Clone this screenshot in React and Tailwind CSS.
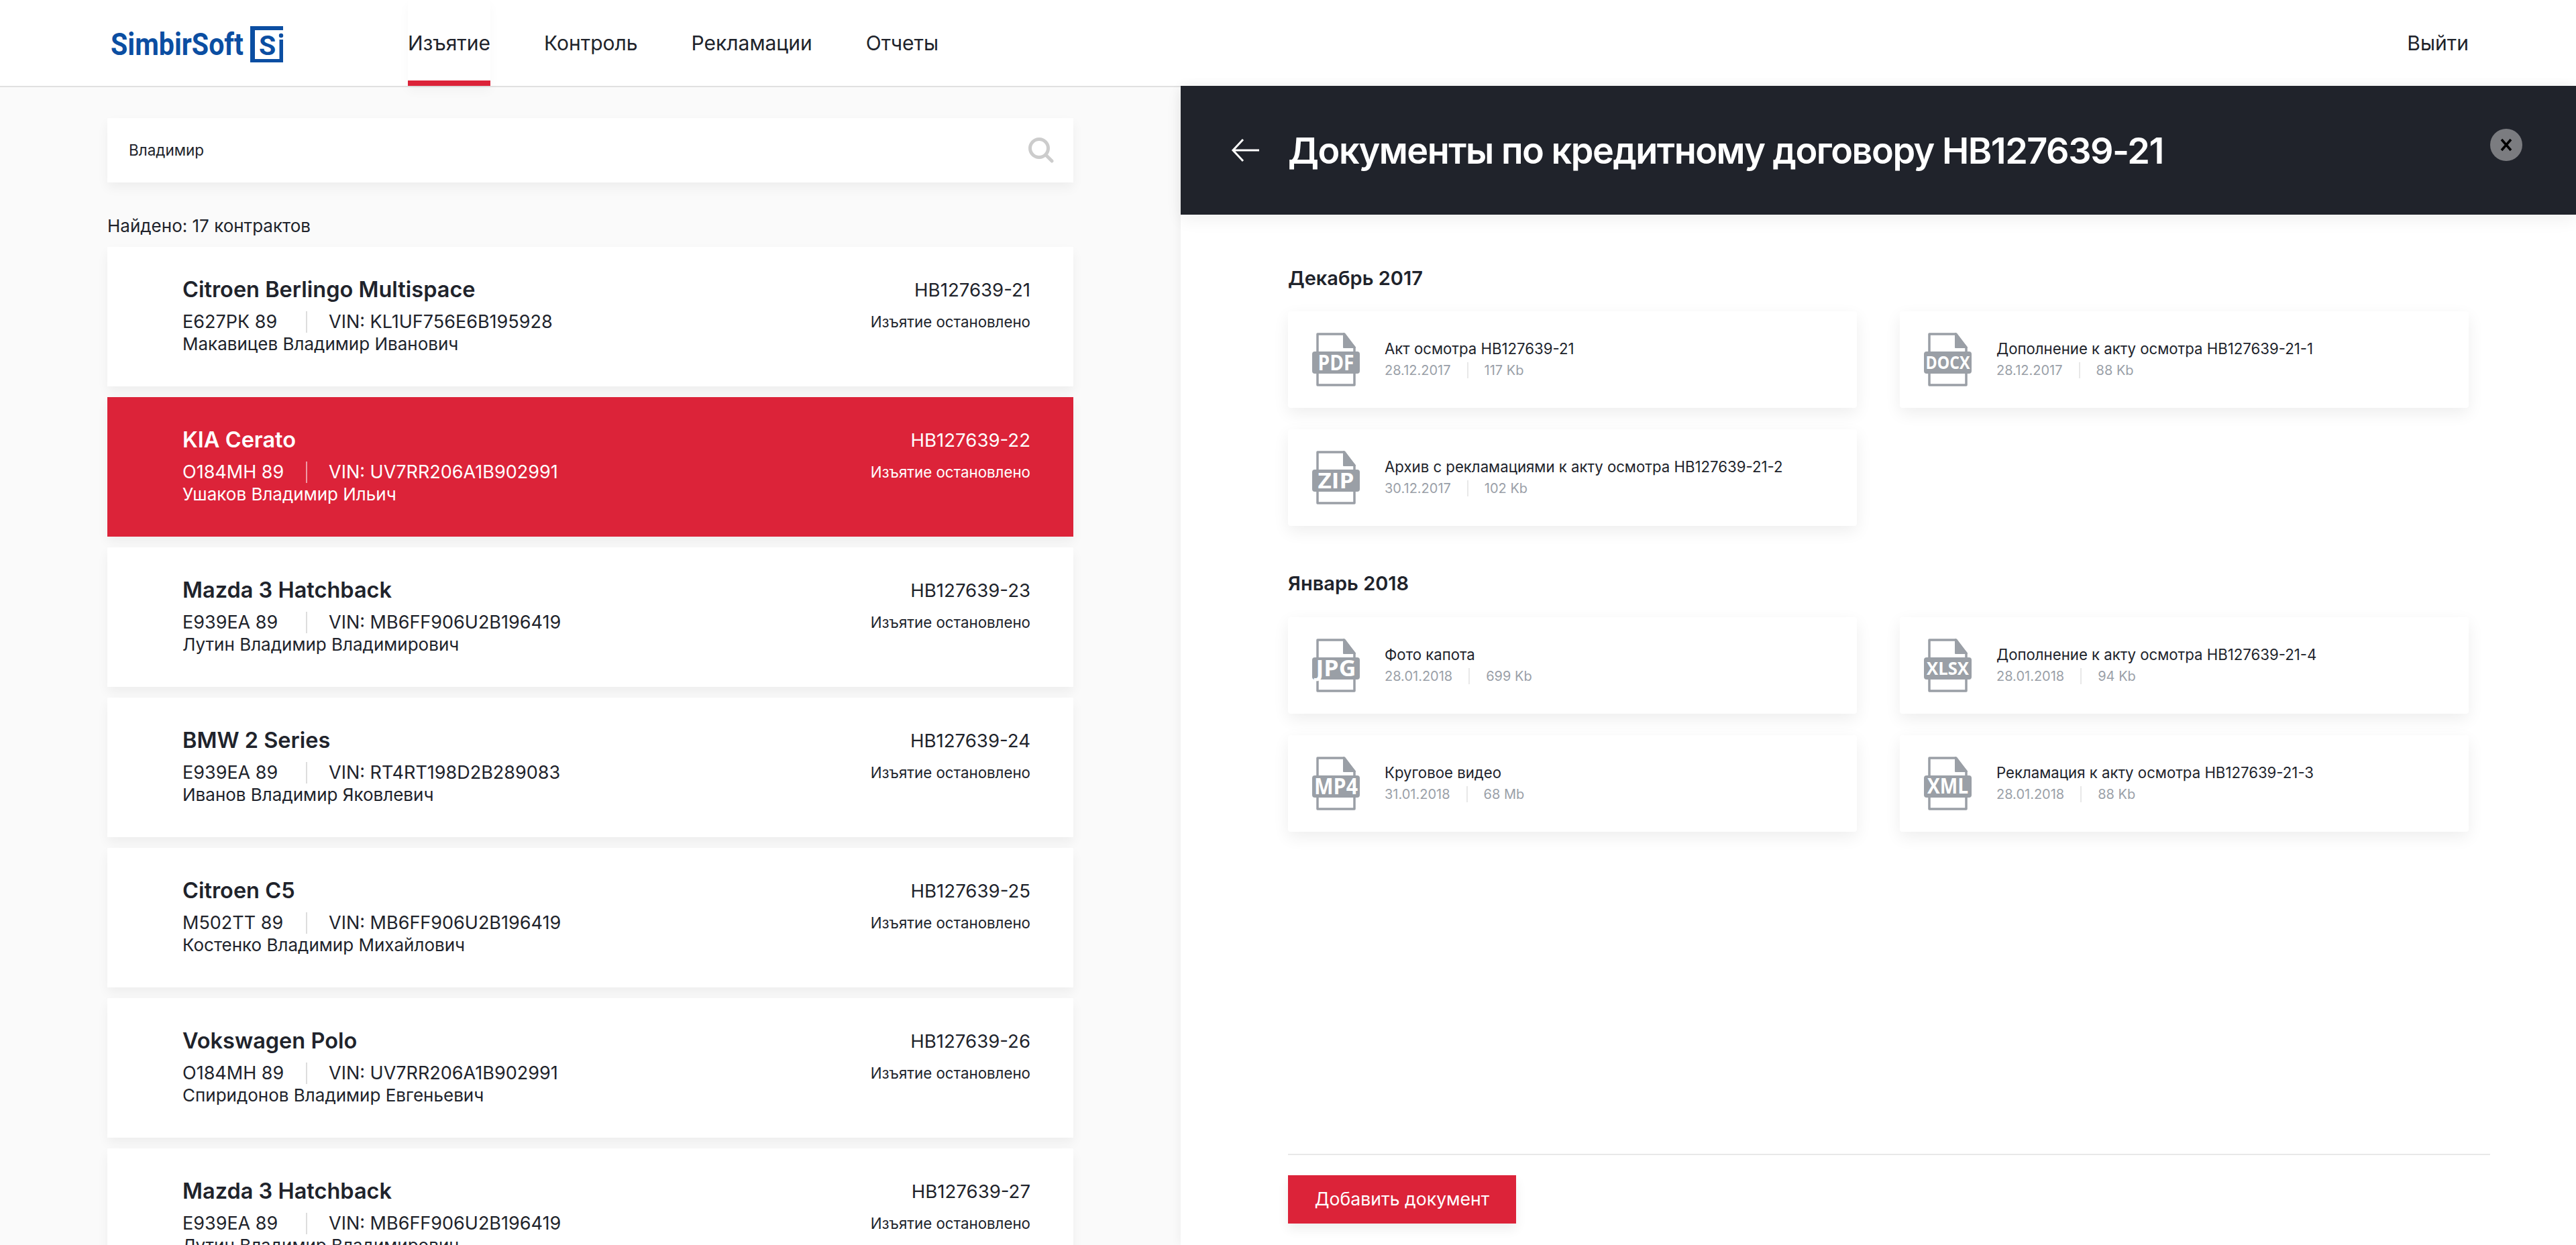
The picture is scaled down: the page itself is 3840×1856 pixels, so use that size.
const contracts = [
  { id: 21, car: "Citroen Berlingo Multispace", plate: "Е627РК 89", vin: "KL1UF756E6B195928", name: "Макавицев Владимир Иванович" },
  { id: 22, car: "KIA Cerato", plate: "О184МН 89", vin: "UV7RR206A1B902991", name: "Ушаков Владимир Ильич", active: true },
  { id: 23, car: "Mazda 3 Hatchback", plate: "Е939ЕА 89", vin: "MB6FF906U2B196419", name: "Лутин Владимир Владимирович" },
  { id: 24, car: "BMW 2 Series", plate: "Е939ЕА 89", vin: "RT4RT198D2B289083", name: "Иванов Владимир Яковлевич" },
  { id: 25, car: "Citroen C5", plate: "М502ТТ 89", vin: "MB6FF906U2B196419", name: "Костенко Владимир Михайлович" },
  { id: 26, car: "Vokswagen Polo", plate: "О184МН 89", vin: "UV7RR206A1B902991", name: "Спиридонов Владимир Евгеньевич" },
  { id: 27, car: "Mazda 3 Hatchback", plate: "Е939ЕА 89", vin: "MB6FF906U2B196419", name: "Лутин Владимир Владимирович" },
];

function Logo() {
  return (
    <svg width="260" height="56" viewBox="0 0 260 56" className="block">
      <text x="0" y="44" fontFamily="Roboto, sans-serif" fontWeight="700" fontSize="46" fill="#0b4ea2" textLength="198" lengthAdjust="spacingAndGlyphs">SimbirSoft</text>
      <path d="M257 1H208V55H257V50H215V7H257Z" fill="#0b4ea2" />
      <text x="221" y="44" fontFamily="Roboto, sans-serif" fontWeight="700" fontSize="41" fill="#0b4ea2">S</text>
      <circle cx="254" cy="15" r="3.2" fill="#0b4ea2" />
      <rect x="251.5" y="21" width="5.5" height="30" fill="#0b4ea2" />
    </svg>
  );
}

function FileIcon({ ext, size, len, base }) {
  return (
    <svg width="71" height="80" viewBox="0 0 71 80" className="block shrink-0">
      <path d="M8 2H48L63 22V78H8Z" fill="#fff" stroke="#9a9fa6" strokeWidth="3.5" strokeLinejoin="round" />
      <path d="M47 1V22H64Z" fill="#9a9fa6" stroke="#9a9fa6" strokeWidth="2" strokeLinejoin="round" />
      <rect x="0" y="28" width="71" height="33" rx="4" fill="#9a9fa6" />
      <text x="35.5" y={base} textAnchor="middle" fontFamily="'Open Sans', sans-serif" fontWeight="700" fontSize={size} fill="#fff" textLength={len} lengthAdjust="spacingAndGlyphs">{ext}</text>
    </svg>
  );
}

function DocCard({ ext, size, len, base, title, date, weight }) {
  return (
    <div className="h-[144px] bg-white rounded-[4px] shadow-[0_8px_24px_rgba(0,0,0,0.07)] flex items-center pl-[36px]">
      <FileIcon ext={ext} size={size} len={len} base={base} />
      <div className="ml-[37px]">
        <div className="text-[22.2px] leading-[32px] text-[#20232b] -mt-[4px]">{title}</div>
        <div className="flex items-center text-[20px] leading-[24px] text-[#9a9fa8] mt-[4px]">
          <span>{date}</span>
          <span className="w-[2px] h-[24px] bg-[#e8e8e8] mx-[24px]" />
          <span>{weight}</span>
        </div>
      </div>
    </div>
  );
}

function ContractCard({ c }) {
  const a = c.active;
  return (
    <div className={a ? "h-[208px] shrink-0 bg-[#dc2339] text-white shadow-[0_8px_16px_rgba(0,0,0,0.05)] pl-[112px] pr-[64px] pt-[44px] flex justify-between" : "h-[208px] shrink-0 bg-white text-[#20232b] shadow-[0_8px_16px_rgba(0,0,0,0.05)] pl-[112px] pr-[64px] pt-[44px] flex justify-between"}>
      <div>
        <div className="text-[32.5px] leading-[40px] font-semibold">{c.car}</div>
        <div className="flex items-center text-[27px] leading-[32px] mt-[12px]">
          <span className="w-[184px]">{c.plate}</span>
          <span className={a ? "w-[2px] h-[32px] bg-[#ee9aa5] mr-[32px]" : "w-[2px] h-[32px] bg-[#dddddd] mr-[32px]"} />
          <span>VIN: {c.vin}</span>
        </div>
        <div className="text-[26px] leading-[32px] mt-[1px]">{c.name}</div>
      </div>
      <div className="text-right">
        <div className="text-[27.6px] leading-[40px]">НВ127639-{c.id}</div>
        <div className="text-[22.3px] leading-[32px] mt-[12px]">Изъятие остановлено</div>
      </div>
    </div>
  );
}

export default function App() {
  return (
    <div className="h-screen flex flex-col overflow-hidden bg-white font-['Inter',sans-serif] text-[#20232b]">
      <header className="h-[130px] shrink-0 bg-white border-b-2 border-[#e0e0e0] flex items-start pl-[165px] pr-[160px] relative">
        <div className="mt-[38px]"><Logo /></div>
        <nav className="flex ml-[183px] text-[30px] gap-[80px] h-[128px]">
          <a className="h-full flex items-center border-b-[8px] border-[#dc2339] pt-[8px] shadow-[0_8px_16px_rgba(0,0,0,0.03)]">Изъятие</a>
          <a className="h-full flex items-center">Контроль</a>
          <a className="h-full flex items-center">Рекламации</a>
          <a className="h-full flex items-center">Отчеты</a>
        </nav>
        <a className="ml-auto h-[128px] flex items-center text-[30px]">Выйти</a>
      </header>

      <main className="flex-1 flex min-h-0 -mt-[2px]">
        <section className="w-[1760px] shrink-0 bg-[#fafafa] px-[160px] pt-[48px] overflow-hidden flex flex-col">
          <div className="h-[96px] shrink-0 bg-white shadow-[0_8px_16px_rgba(0,0,0,0.05)] flex items-center justify-between pl-[32px] pr-[29px]">
            <span className="text-[22.5px]">Владимир</span>
            <svg width="38" height="38" viewBox="0 0 38 38" fill="none" stroke="#cccccc" strokeWidth="5" strokeLinecap="round">
              <circle cx="16" cy="16" r="13.5" />
              <path d="M26 26L35 35" />
            </svg>
          </div>
          <div className="text-[26px] leading-[32px] mt-[49px] mb-[15px] shrink-0">Найдено: 17 контрактов</div>
          <div className="flex flex-col gap-[16px]">
            {contracts.map((c) => <ContractCard key={c.id} c={c} />)}
          </div>
        </section>

        <section className="flex-1 bg-white flex flex-col relative shadow-[0_0_16px_rgba(0,0,0,0.06)]">
          <div className="h-[192px] shrink-0 bg-[#20232b] flex items-center pl-[75px] pr-[80px] shadow-[0_8px_24px_rgba(0,0,0,0.06)]">
            <svg width="42" height="36" viewBox="0 0 42 36" fill="none" stroke="#fff" strokeWidth="3" className="shrink-0">
              <path d="M42 18H3M18 2L3 18L18 34" />
            </svg>
            <h1 className="ml-[43px] text-[54px] leading-[64px] font-semibold tracking-[-1.5px] text-white mt-[2px]">Документы по кредитному договору НВ127639-21</h1>
            <div className="ml-auto w-[48px] h-[48px] rounded-full bg-[#7b7c80] flex items-center justify-center -mt-[16px]">
              <svg width="22" height="22" viewBox="0 0 22 22" stroke="#000" strokeWidth="3.5" fill="none">
                <path d="M4 3L18 19M18 3L4 19" />
              </svg>
            </div>
          </div>

          <div className="flex-1 pl-[160px] pr-[160px] pt-[75px]">
            <h2 className="text-[29px] leading-[40px] font-semibold mb-[29px]">Декабрь 2017</h2>
            <div className="grid grid-cols-2 gap-x-[64px] gap-y-[32px]">
              <DocCard ext="PDF" size={32} len={54} base={56} title="Акт осмотра НВ127639-21" date="28.12.2017" weight="117 Kb" />
              <DocCard ext="DOCX" size={26} len={66} base={54} title="Дополнение к акту осмотра НВ127639-21-1" date="28.12.2017" weight="88 Kb" />
              <DocCard ext="ZIP" size={32} len={54} base={56} title="Архив с рекламациями к акту осмотра НВ127639-21-2" date="30.12.2017" weight="102 Kb" />
            </div>
            <h2 className="text-[29px] leading-[40px] font-semibold mt-[66px] mb-[30px]">Январь 2018</h2>
            <div className="grid grid-cols-2 gap-x-[64px] gap-y-[32px]">
              <DocCard ext="JPG" size={34} len={60} base={56} title="Фото капота" date="28.01.2018" weight="699 Kb" />
              <DocCard ext="XLSX" size={26} len={63} base={54} title="Дополнение к акту осмотра НВ127639-21-4" date="28.01.2018" weight="94 Kb" />
              <DocCard ext="MP4" size={34} len={65} base={56} title="Круговое видео" date="31.01.2018" weight="68 Mb" />
              <DocCard ext="XML" size={32} len={61} base={55} title="Рекламация к акту осмотра НВ127639-21-3" date="28.01.2018" weight="88 Kb" />
            </div>
          </div>

          <div className="h-[136px] shrink-0 ml-[160px] mr-[128px] border-t-2 border-[#e8e8e8] pt-[30px]">
            <button className="w-[340px] h-[72px] bg-[#dc2339] text-white text-[26.6px] shadow-[0_8px_16px_rgba(0,0,0,0.07)]">Добавить документ</button>
          </div>
        </section>
      </main>
    </div>
  );
}
